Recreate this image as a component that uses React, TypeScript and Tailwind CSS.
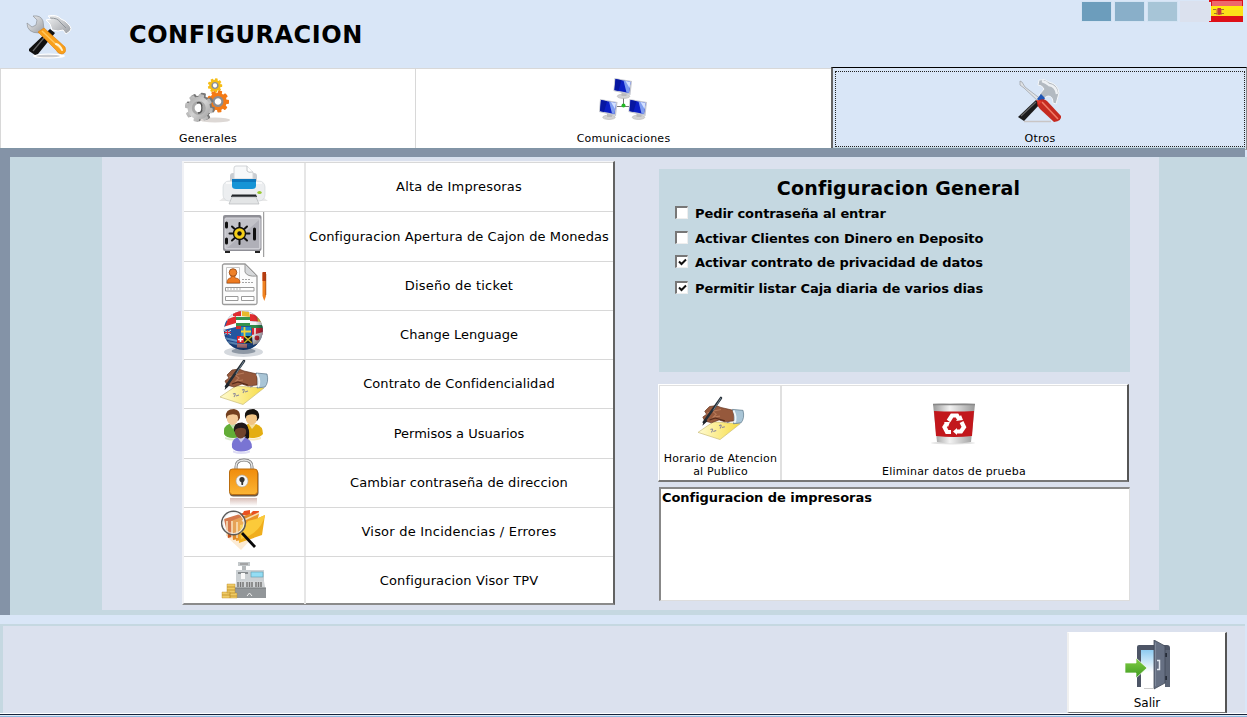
import React from "react";

const Tools = () => (
  <svg width="48" height="44" viewBox="0 0 48 44">
    <defs>
      <linearGradient id="steel" x1="0" y1="0" x2="1" y2="1">
        <stop offset="0" stopColor="#f4f5f6" />
        <stop offset="1" stopColor="#9a9da2" />
      </linearGradient>
    </defs>
    <ellipse cx="24" cy="41" rx="16" ry="2.600" fill="#fff" />
    <ellipse cx="23" cy="41" rx="12" ry="1.3" fill="#c9ccd2" />
    <path d="M25 14 30 18 13 39 10 40 4 36 4 34Z" fill="#111" />
    <path d="M8 36 23 18" stroke="#666" strokeWidth="1.2" />
    <path d="M23 1q9-2 13 3l4 2q3 3 5 5 2 3 0 5l-4 3-3-4-5 1-6-1q-1-7-6-10l5-1z" fill="url(#steel)" stroke="#fff" />
    <path d="M25 3q8 0 10 4l6 6" stroke="#8f949a" fill="none" />
    <path d="M2 8 7 12 11 10 12 5 8 1q8-1 10 5l1 8-5 4q-12 0-12-10z" fill="url(#steel)" stroke="#8f949a" strokeWidth=".7" />
    <path d="M13 17 19 13 40 32q2 6-3 7-4 0-6-4z" fill="#f9a01c" stroke="#e07f08" strokeWidth=".6" />
    <path d="M17 16 36 34" stroke="#ffc65c" strokeWidth="1.5" />
    <path d="M31 29q4 1 6 6" stroke="#fff3d5" strokeWidth="2" fill="none" strokeLinecap="round" />
  </svg>
);

const Gear = ({ cx, cy, r, fill, n = 9, ring = "#8b8d92" }: { cx: number; cy: number; r: number; fill: string; n?: number; ring?: string }) => (
  <g transform={`translate(${cx} ${cy})`}>
    {Array.from({ length: n }, (_, i) => (
      <rect key={i} x={-r * 0.19} y={-r} width={r * 0.38} height={r} rx={r * 0.08} fill={fill} transform={`rotate(${(i * 360) / n + 12})`} />
    ))}
    <circle r={r * 0.8} fill={fill} />
    <circle r={r * 0.4} fill="#fff" stroke={ring} strokeWidth={r * 0.2} />
  </g>
);

const Gears = () => (
  <svg width="46" height="46" viewBox="0 0 46 46">
    <defs>
      <linearGradient id="gg" gradientUnits="userSpaceOnUse" x1="-12" y1="-12" x2="12" y2="12">
        <stop offset="0" stopColor="#a6a6a6" />
        <stop offset=".5" stopColor="#d2d2d2" />
        <stop offset="1" stopColor="#9a9a9a" />
      </linearGradient>
    </defs>
    <ellipse cx="30" cy="42" rx="15" ry="2.5" fill="#ddd8d5" />
    <path d="M20 20 26 19 27 28 20 29Z" fill="#555" />
    <Gear cx={30} cy={7.5} r={7.2} fill="#f6bd16" />
    <Gear cx={33} cy={23.5} r={11} fill="#f47a16" />
    <Gear cx={15.500} cy={29} r={14.3} fill="#777" n={8} />
    <Gear cx={13.8} cy={30} r={14} fill="url(#gg)" n={8} ring="#a9a9a9" />
    <path d="M12 25q5-2 5 5 0 5-4 5" stroke="#555" strokeWidth="1.5" fill="none" />
  </svg>
);

const Screen = ({ x, y }: { x: number; y: number }) => (
  <g transform={`translate(${x} ${y})`}>
    <ellipse cx="10" cy="18.3" rx="6.3" ry="2.2" fill="#d3d3d3" stroke="#aaa" strokeWidth=".5" />
    <path d="M8 14h5v4H8z" fill="#bbb" />
    <path d="M1 0 18.500 3 17 17 0 13Z" fill="#c3c6d0" />
    <path d="M2 1 17 4 15.500 15 1 12Z" fill="#0b1fc4" />
    <path d="M10 2.600 17 4 15.500 15 13 14.400Z" fill="#7f9df0" />
    <path d="M12 3 17 4 16 10Z" fill="#d5e2ff" />
    <path d="M2 1 8 2.200 5 13 1 12Z" fill="#0616a0" />
  </g>
);

const Network = () => (
  <svg width="50" height="44" viewBox="0 0 50 44">
    <path d="M24.500 18V28M16 28.500H34" stroke="#777" fill="none" />
    <Screen x={14.5} y={0} />
    <Screen x={0} y={21} />
    <Screen x={29.500} y={21} />
    <circle cx="24.500" cy="27.500" r="2" fill="#22b822" />
  </svg>
);

const Repair = () => (
  <svg width="46" height="44" viewBox="0 0 46 44">
    <path d="M7 42.500H34" stroke="#c9c5c5" strokeWidth="1.500" />
    <path d="M3 2 5 3 8 8 25 21 22 23 7 9 3 6Z" fill="#dfe2e5" stroke="#8d9196" strokeWidth=".6" />
    <path d="M19 21 23 25 7 42 1 38Z" fill="#1b1b1d" />
    <path d="M4 37 19 23" stroke="#666" strokeWidth="1.200" />
    <path d="M22 1q6-2 10 2 9 2 10 11l-3 11-3-1q0-7-5-7l-4 2-5-3 5-6q-2-4-6-4z" fill="#b3bac1" stroke="#f4f7fa" strokeWidth="1" />
    <path d="M25 2q4 1 7 4 7 1 8 9" stroke="#eef1f4" strokeWidth="2.400" fill="none" />
    <path d="M20 20 24 15 28 19 25 25Z" fill="#1f56b5" />
    <path d="M22 21q5-2 8 1l14 15q1 5-7 6L23 30q-3-3-3-6z" fill="#c52a20" />
    <path d="M25 23 41 40" stroke="#f17b66" strokeWidth="1.600" />
    <path d="M19 21 25 22 22 26Z" fill="#e4372b" />
  </svg>
);

const Printer = () => (
  <g>
    <path d="M0 39 9 32H40L49 39Z" fill="#e9e9e9" />
    <rect x="11" y="11" width="27" height="14" rx="3" fill="#c9cdd2" />
    <path d="M15 17V6q0-2 2-2h11l6 6v7z" fill="#f8f9fa" stroke="#d2d5d8" />
    <path d="M28 4v5q1 2 6 1" fill="#fff" stroke="#c4c7ca" />
    <rect x="4" y="19" width="42" height="20" rx="6" fill="#eceef0" stroke="#cfd3d7" strokeWidth=".6" />
    <path d="M7 21H43" stroke="#fafafa" strokeWidth="2" />
    <path d="M13 17H37V24Q37 27 33 27H17Q13 27 13 24Z" fill="#1694d6" />
    <path d="M13 17H37V20H13Z" fill="#0c77bd" />
    <path d="M13 32.500H37L38 35H12Z" fill="#222629" />
    <path d="M13 35H37L40 42H10Z" fill="#e3e5e6" stroke="#b4b7ba" strokeWidth=".7" />
    <ellipse cx="40.500" cy="30.500" rx="2.200" ry="1.500" fill="#9ac930" />
  </g>
);

const Safe = () => (
  <g>
    <path d="M6 38h5v4H6zM36 38h5v4h-5z" fill="#222" />
    <rect x="4" y="4" width="38.500" height="36" rx="2" fill="#8f8f96" />
    <rect x="6" y="7" width="35" height="31" rx="1" fill="#c3c3c9" stroke="#d9d9df" />
    <path d="M8 37 40 9V37Z" fill="#b0b0b8" />
    <g stroke="#111" strokeWidth="2" strokeLinecap="round">
      <path d="M20.500 12V33M10.500 22.500H30.500M13 15.500 28 29.500M28 15.500 13 29.500" />
    </g>
    <circle cx="20.500" cy="22.500" r="6" fill="#f4ce18" stroke="#111" strokeWidth="1.400" />
    <circle cx="20.500" cy="22.500" r="2.200" fill="#111" />
    <path d="M7.500 12V16M7.500 28V32M35.500 18V28" stroke="#111" strokeWidth="3" strokeLinecap="round" />
    <path d="M44.700 1V46" stroke="#8c8c8c" />
  </g>
);

const Document = () => (
  <g>
    <path d="M5 3H26L38 15V42Q38 43.500 36 43.500H5Q3.500 43.500 3.500 42V4Z" fill="#fcfcfc" stroke="#9b9b9b" strokeWidth="1.300" />
    <path d="M26 3 38 15Q28 16 26 11Z" fill="#d6d8da" stroke="#999" />
    <path d="M7.500 6.500H20.500V22.500H7.500Z" fill="#fff" stroke="#c7c7c7" />
    <path d="M8 22q0-5 4-5v-3h4v3q5 0 5 5z" fill="#ee7b20" stroke="#a94b0c" strokeWidth=".7" />
    <circle cx="14" cy="11.500" r="3.800" fill="#ef8127" stroke="#8f430f" strokeWidth=".8" />
    <path d="M23 18.500H31M23 21.500H35" stroke="#a5a5a5" strokeDasharray="2 1" />
    <path d="M6.500 26.500H35V30H6.500ZM6.500 35.500H19V39.500H6.500ZM22.500 35.500H35V39.500H22.500Z" fill="#fff" stroke="#999" />
    <path d="M8 28H22" stroke="#bbb" strokeDasharray="2 1" />
    <path d="M43.500 12H47V35L45.300 40 43.500 35Z" fill="#f08220" />
    <path d="M43.500 11H47V20H43.500Z" fill="#b53c12" />
    <path d="M46.800 13V34" stroke="#9d420c" strokeWidth=".7" />
  </g>
);

const Globe = () => (
  <g>
    <defs>
      <clipPath id="gc"><circle cx="24.300" cy="20.500" r="19.500" /></clipPath>
      <radialGradient id="gs" cx=".42" cy=".35" r=".66">
        <stop offset=".6" stopColor="#001" stopOpacity="0" />
        <stop offset="1" stopColor="#001" stopOpacity=".5" />
      </radialGradient>
    </defs>
    <ellipse cx="24.500" cy="42" rx="19.500" ry="5" fill="#d5d9de" />
    <ellipse cx="24.500" cy="41" rx="12" ry="3" fill="#8e98a4" />
    <g clipPath="url(#gc)">
      <rect x="4" width="41" height="41" fill="#24559f" />
      <path d="M4 0H45V7L17 8 4 12Z" fill="#efede8" />
      <path d="M14 1H22V6H14ZM9 9 17 6V14L6 17ZM31 4 38 5 39 12 31 11Z" fill="#e12d30" />
      <path d="M23 1 30 2 31 7 23 6Z" fill="#e8b92c" />
      <path d="M38 5 44 11V15L39 12Z" fill="#f0c22c" />
      <path d="M17 7H31V10H17ZM17 13H31V16H17Z" fill="#36924c" />
      <path d="M17 10H31V13H17Z" fill="#fff" />
      <path d="M31 11 44 12V15H31Z" fill="#f2f2f2" />
      <path d="M31 15H44V19H31Z" fill="#30894b" />
      <path d="M4 17 17 13V17L4 20Z" fill="#fff" />
      <path d="M17 16H22V19H17Z" fill="#cc302f" />
      <path d="M22 17H32V26H22Z" fill="#218bc8" />
      <path d="M25.500 17V26M22 21.500H32" stroke="#f5d233" strokeWidth="1.800" />
      <path d="M33 18H44V25H33Z" fill="#dc2735" />
      <path d="M36 18V25" stroke="#f4f4ec" strokeWidth="1.700" />
      <path d="M5 20 12 25M12 20 5 25" stroke="#ddd" strokeWidth="1" />
      <path d="M8.500 20V25M5 22.500H12" stroke="#e02737" />
      <path d="M18 26H25V33H18Z" fill="#e4242a" />
      <path d="M21.500 27V32M19 29.500H24" stroke="#fff" strokeWidth="1.600" />
      <path d="M25 26H33V33H25Z" fill="#17211b" />
      <path d="M25 26 33 33M33 26 25 33" stroke="#dec52b" strokeWidth="1.500" />
      <path d="M33 25 44 22V32L34 35Z" fill="#f4f4f4" />
      <circle cx="38" cy="28" r="2.400" fill="#db2d36" />
      <path d="M5 28 18 31M8 32 18 34" stroke="#6ca0d6" strokeWidth="1.800" />
      <path d="M18 35.500 28 36" stroke="#d69090" strokeWidth="4" />
      <path d="M29 35H37V40H29Z" fill="#2368b6" />
    </g>
    <circle cx="24.300" cy="20.500" r="19.500" fill="url(#gs)" />
  </g>
);

const Hand = () => (
  <g>
    <defs>
      <linearGradient id="paper" x1="0" y1="0" x2="1" y2="0">
        <stop offset="0" stopColor="#fffbd0" />
        <stop offset="1" stopColor="#f7dc45" />
      </linearGradient>
    </defs>
    <path d="M1 38 17 27 45 29 24 45.500Z" fill="url(#paper)" stroke="#c9bc77" strokeWidth=".7" />
    <path d="M14 35q4-2 1 3m2-1 3-1M23 31q4-2 1 3m2-1 3-1M31 28l3-1" stroke="#8c889a" strokeWidth="1.100" fill="none" />
    <path d="M8 16 13 11 20 10 25 12 38 15V26L29 27 23 25 15 28 8 26 6 22 10 19Z" fill="#96593c" stroke="#633521" strokeWidth=".7" />
    <path d="M10 18 16 16 20 19 17 22 24 21M16 16 25 14" stroke="#b87b5a" strokeWidth="1.100" fill="none" />
    <path d="M13 25 19 23 29 26" stroke="#552a1a" strokeWidth="1.200" fill="none" />
    <path d="M37 14 48 15Q50 23 46 28L38 29Q41 22 37 14Z" fill="#a9c5d6" stroke="#577386" strokeWidth=".7" />
    <path d="M38 15Q42 23 39 28" stroke="#f1f7fa" strokeWidth="2" fill="none" />
    <path d="M25 2 7 27.500" stroke="#252d35" strokeWidth="2.600" strokeLinecap="round" />
    <path d="M25 2 17 15" stroke="#718493" />
    <path d="M8 24 5.500 31 11 26Z" fill="#20252c" />
  </g>
);

const User = ({ x, y, hair, skin, body }: { x: number; y: number; hair: string; skin: string; body: string }) => (
  <g transform={`translate(${x} ${y})`}>
    <path d="M-9 25Q-10 17-4 15H4Q11 17 11 25Q8 29 0 29-7 29-9 25Z" fill={body} />
    <path d="M-8 28Q0 31 9 28V30Q0 33-8 30Z" fill={body} opacity=".25" />
    <path d="M-4 14 0 20 5 14Z" fill="#fff" opacity=".6" />
    <path d="M-7 8Q-8 0 1 0 8 1 7 9L5 12H-5Z" fill={hair} />
    <ellipse cx="-.500" cy="9.500" rx="5.600" ry="6.500" fill={skin} />
    <path d="M-6 7Q-6 1 0 1 6 2 6 7 0 3.500-6 7Z" fill={hair} />
  </g>
);

const Users = () => (
  <g>
    <User x={14} y={1} hair="#74401f" skin="#f3ca98" body="#62ad36" />
    <User x={33} y={1} hair="#17130f" skin="#f1c585" body="#e4ae12" />
    <path d="M17 22Q20 13 27 17 31 20 30 30L27 32Z" fill="#191315" />
    <User x={22} y={14.500} hair="#20181a" skin="#70432b" body="#7974d3" />
  </g>
);

const Lock = () => (
  <g>
    <defs>
      <linearGradient id="lock" x1="0" y1="0" x2="0" y2="1">
        <stop offset="0" stopColor="#f08c0b" />
        <stop offset="1" stopColor="#fcb535" />
      </linearGradient>
      <linearGradient id="lockShade" x1="0" y1="0" x2="0" y2="1">
        <stop offset="0" stopColor="#d8bdb6" />
        <stop offset="1" stopColor="#fff" />
      </linearGradient>
    </defs>
    <path d="M11 40H38V48H11Z" fill="url(#lockShade)" />
    <path d="M17 13V9Q17 2 25 2T33 9V13" fill="none" stroke="#777" strokeWidth="3" />
    <path d="M17 13V9Q17 2 25 2T33 9V13" fill="none" stroke="#e5e5e5" strokeWidth="1.400" />
    <rect x="10.500" y="12" width="29" height="26.500" rx="4" fill="#6f5a45" />
    <rect x="10.500" y="11" width="28" height="25.500" rx="3" fill="url(#lock)" stroke="#bb6d0d" />
    <circle cx="23" cy="23" r="6" fill="#f6f6f4" stroke="#aaa" strokeWidth=".6" />
    <circle cx="23" cy="21.500" r="2.600" fill="#333" />
    <path d="M22 22H24.500L24 27H22.500Z" fill="#333" />
  </g>
);

const Folders = () => (
  <g>
    <path d="M8 30H34L22 43Z" fill="#fcebd4" />
    <path d="M23 8 25 4 31 3 31 7 34 4 40 4 39 10Z" fill="#e95121" />
    <path d="M5 12 24 6 24 27 9 31Z" fill="#c9541c" />
    <path d="M12 14 33 6 29 30 14 33Z" fill="#df8828" />
    <path d="M18 15 40 6 35 31 17 34Z" fill="#e9962a" />
    <path d="M8 14V29M13 14V30M18 15V31M23 14 40 6" stroke="#f8dcae" strokeWidth="1.500" />
    <path d="M21 18 27 17 29 14 37 12 46 8 43 28 20 36Z" fill="#f0ae1c" />
    <path d="M21 18 27 17 29 14 37 12 46 8Q42 26 22 32Z" fill="#fbca3a" />
    <circle cx="14.500" cy="16" r="11.800" fill="#fff" fillOpacity=".22" stroke="#5b5b5b" strokeWidth="1.500" />
    <circle cx="14.500" cy="16" r="10.500" fill="none" stroke="#eee" />
    <path d="M23 26 36 40" stroke="#080808" strokeWidth="2.800" />
  </g>
);

const Register = () => (
  <g>
    <path d="M19 6H31V10H19Z" fill="#c3c8ca" />
    <path d="M21 8H29" stroke="#999" strokeWidth="1.500" />
    <path d="M23 10H27V16H23Z" fill="#b5b9bb" />
    <path d="M17 14H45V26H17Z" fill="#cbd0d3" />
    <path d="M17 25H45L47 36H16Z" fill="#d2d5d7" />
    <path d="M16 32H47V42H16Z" fill="#929699" />
    <path d="M16 32H47" stroke="#767a7d" />
    <rect x="32" y="16" width="12" height="5" fill="#93ddf4" stroke="#5d9aad" strokeWidth=".6" />
    <path d="M19 16H29V18H19Z" fill="#868b8e" />
    <path d="M22 17H26V23H22Z" fill="#f8f8f8" />
    <path d="M19 26V31M21.500 26V31M24 26V31M28 26V31M30.500 26V31M33 26V31M37 26V31M39.500 26V31M42 26V31" stroke="#777" strokeWidth="1.500" />
    <path d="M28 40 30.500 37 33 40" stroke="#eee" fill="none" />
    <g fill="#efcb66" stroke="#b88722" strokeWidth=".4">
      <path d="M8 28H16V31H8ZM8 31H16V34H8ZM8 34H16V37H8ZM3 36H11V39H3ZM3 39H11V42H3ZM11 37H18V40H11ZM11 40H18V42H11Z" />
    </g>
  </g>
);

const Bin = () => (
  <svg width="46" height="44" viewBox="0 0 46 44">
    <defs>
      <linearGradient id="tin">
        <stop offset="0" stopColor="#999" />
        <stop offset=".4" stopColor="#f2f2f2" />
        <stop offset="1" stopColor="#999" />
      </linearGradient>
    </defs>
    <ellipse cx="22" cy="41" rx="22" ry="1.500" fill="#e2e2e2" />
    <path d="M2 2Q23 0 44 2L40 40Q23 43 6 40Z" fill="url(#tin)" />
    <path d="M2 2.500H44" stroke="#888" strokeWidth="1.500" />
    <path d="M3 9Q23 10 43 9L41 34Q23 36 5 34Z" fill="#c2171c" />
    <g fill="none" stroke="#fff" strokeWidth="4.200">
      <path d="M17.500 19 21 13.500H26L28 17" />
      <path d="M30.500 20 33 25 30 29.500H25" />
      <path d="M20 30H16L13.500 25 16 21" />
    </g>
    <path d="M25 19 32 18 30 13ZM26 26V33L22 29.500ZM13 20 19 20 17 25Z" fill="#fff" />
  </svg>
);

const Door = () => (
  <svg width="46" height="50" viewBox="0 0 46 50">
    <defs>
      <linearGradient id="sky" x1="0" y1="0" x2="0" y2="1">
        <stop offset="0" stopColor="#8ecbf0" />
        <stop offset=".6" stopColor="#fff" />
      </linearGradient>
      <linearGradient id="arrow" x1="0" y1="0" x2="0" y2="1">
        <stop offset="0" stopColor="#83cf45" />
        <stop offset="1" stopColor="#3d9a20" />
      </linearGradient>
    </defs>
    <path d="M12 47V7Q12 5 14 5H42Q45 5 45 8V47H40V10H16V47Z" fill="#4d5566" />
    <path d="M16 10H32V47H16Z" fill="url(#sky)" />
    <path d="M40 10H45V47H40Z" fill="#5b6475" />
    <path d="M38 13H42V17H38ZM38 36H42V40H38Z" fill="#252c38" />
    <path d="M29 0 40 6V43L29 49Z" fill="#667083" stroke="#434a58" strokeWidth=".8" />
    <path d="M30.500 2.500V46" stroke="#7f899a" />
    <path d="M32 20.500H34.500V29.500H32" stroke="#e3e8ef" strokeWidth="1.500" fill="none" />
    <path d="M19 48.500H29" stroke="#ccc" />
    <path d="M0 23H11V18L22 28 11 38V33H0Z" fill="url(#arrow)" stroke="#fff" strokeWidth=".7" />
  </svg>
);

const Flag = () => (
  <svg width="34" height="22" viewBox="0 0 34 22">
    <path d="M0 0H34V22H0V21H2V2H0Z" fill="#de1018" />
    <path d="M3 1H33V6H3Z" fill="#ee676b" />
    <path d="M2 6H34V16H2Z" fill="#ffe80e" />
    <path d="M2 10H34V16H2Z" fill="#fbe01a" />
    <path d="M7 9H13V15H7Z" fill="#e39b30" />
    <path d="M8.500 8H12V14L10 15 8.500 14Z" fill="#c6343c" />
    <path d="M4 9.500H7M12 9.500H15M5 13.500H8M12 13.500H15" stroke="#a5702f" />
  </svg>
);

const rows: { label: string; h: string; icon: React.ReactNode; track: string }[] = [
  { label: "Alta de Impresoras", h: "h-[49px]", icon: <Printer />, track: "tracking-[0.17px]" },
  { label: "Configuracion Apertura de Cajon de Monedas", h: "h-[50px]", icon: <Safe />, track: "tracking-[0.1px]" },
  { label: "Diseño de ticket", h: "h-[49px]", icon: <Document />, track: "tracking-[0.2px]" },
  { label: "Change Lenguage", h: "h-[49px]", icon: <Globe />, track: "tracking-normal" },
  { label: "Contrato de Confidencialidad", h: "h-[49px]", icon: <Hand />, track: "tracking-[0.07px]" },
  { label: "Permisos a Usuarios", h: "h-[50px]", icon: <Users />, track: "tracking-normal" },
  { label: "Cambiar contraseña de direccion", h: "h-[49px]", icon: <Lock />, track: "tracking-[0.08px]" },
  { label: "Visor de Incidencias / Errores", h: "h-[49px]", icon: <Folders />, track: "tracking-[0.22px]" },
  { label: "Configuracion Visor TPV", h: "h-[49px]", icon: <Register />, track: "tracking-[0.13px]" },
];

const checks: { label: string; on: boolean; h: string }[] = [
  { label: "Pedir contraseña al entrar", on: false, h: "h-[25px]" },
  { label: "Activar Clientes con Dinero en Deposito", on: false, h: "h-[24px]" },
  { label: "Activar contrato de privacidad de datos", on: true, h: "h-[26px]" },
  { label: "Permitir listar Caja diaria de varios dias", on: true, h: "h-[25px]" },
];

const Check = ({ on }: { on: boolean }) => (
  <span className="flex size-[13px] items-center justify-center border-t-2 border-r border-b border-l-2 border-t-[#777] border-r-[#eee] border-b-[#eee] border-l-[#777] bg-white">
    {on && (
      <svg width="9" height="9" viewBox="0 0 9 9">
        <path d="M1 3.500 3.500 6 8 1.500" fill="none" stroke="#111" strokeWidth="2" />
      </svg>
    )}
  </span>
);

const Tab = ({ label, children }: { label: string; children: React.ReactNode }) => (
  <button className="flex flex-col items-center border-t border-l border-[#d8d8d8] bg-white text-[11px] leading-[14px] tracking-[0.25px]">
    <span className="flex h-[63px] items-start pt-[9px]">{children}</span>
    {label}
  </button>
);

export default function App() {
  return (
    <div className="flex h-[717px] w-[1247px] flex-col overflow-hidden bg-[#d9e6f7] font-['DejaVu_Sans',Verdana,sans-serif] text-black">
      <header className="flex h-[67px] shrink-0 justify-between">
        <div className="flex">
          <div className="pt-[15px] pl-[25px]"><Tools /></div>
          <h1 className="mt-[19px] ml-[56px] text-[24px] leading-[32px] font-bold tracking-[0.55px] whitespace-nowrap">CONFIGURACION</h1>
        </div>
        <div className="flex">
          <div className="mt-px flex h-[21px] gap-[2px]">
            <span className="w-[31px] border border-[#d3e3f3] bg-[#6c9dbc]" />
            <span className="w-[31px] border border-[#d3e3f3] bg-[#89afc9]" />
            <span className="w-[31px] border border-[#d3e3f3] bg-[#a7c5d7]" />
            <span className="w-[30px] bg-[#dbe1ee]" />
          </div>
          <div className="mr-[4px] -ml-px"><Flag /></div>
        </div>
      </header>

      <nav className="grid h-[81px] shrink-0 grid-cols-[415px_416px_416px] border-b border-[#c6d9e4] pt-px">
        <Tab label="Generales"><Gears /></Tab>
        <Tab label="Comunicaciones"><Network /></Tab>
        <button className="-mt-px flex border-t border-r border-b border-l-2 border-t-black border-r-[#888] border-b-[#aaa] border-l-[#666] pt-[3px] pr-px pb-[2px] pl-[2px]">
          <span className="flex h-full flex-1 flex-col items-center border border-dotted border-[#222] text-[11px] leading-[14px] tracking-[0.25px]">
            <span className="flex h-[60px] items-start pt-[7px]"><Repair /></span>
            Otros
          </span>
        </button>
      </nav>

      <div className="mr-[2px] h-[9px] shrink-0 border-t border-[#8095a5] bg-[#8493a7]" />

      <main className="mb-[9px] flex h-[458px] shrink-0 border-l-[10px] border-[#8493a7] bg-[#c5d8e1]">
        <div className="ml-[92px] flex h-[453px] w-[1057px] border-t border-[#d8e2f0] bg-[#dbe1ee]">
          <div className="mt-[3px] ml-[80px] h-[444px] w-[433px] border-t border-r-2 border-b-2 border-l-2 border-t-[#f4f5f8] border-r-[#626262] border-b-[#8b8b8b] border-l-[#f0f1f5] bg-white">
            {rows.map((r) => (
              <button key={r.label} className={`${r.h} flex w-full border-t border-[#d8d8d8] last:h-[48px]`}>
                <span className="-mt-px flex w-[120px] shrink-0 justify-center">
                  <svg width="50" height="48" viewBox="0 0 50 48" className="overflow-visible">{r.icon}</svg>
                </span>
                <span className={`${r.track} flex h-full flex-1 items-center justify-center border-l-2 border-[#e6e6e6] pr-px text-[13px] whitespace-nowrap`}>
                  {r.label}
                </span>
              </button>
            ))}
          </div>
          <div className="mt-[11px] ml-[43px] flex flex-col">
            <section className="ml-px h-[203px] w-[471px] bg-[#c5d8e1]">
              <h2 className="mr-px ml-[9px] pt-[7px] text-center text-[19px] leading-[24px] font-bold tracking-[0.2px]">Configuracion General</h2>
              <div className="mt-[6px] ml-[16px]">
                {checks.map((c) => (
                  <label key={c.label} className={`${c.h} flex items-start gap-[7px] text-[13px] leading-[15px] font-bold tracking-[-0.09px] whitespace-nowrap`}>
                    <Check on={c.on} />
                    {c.label}
                  </label>
                ))}
              </div>
            </section>
            <div className="mt-[12px] flex h-[98px] w-[471px] border-t border-r-2 border-b-2 border-l border-t-white border-r-[#555] border-b-[#777] border-l-white bg-white text-[11px] leading-[13px] tracking-[0.21px]">
              <button className="flex w-[123px] flex-col items-center border-t border-r-2 border-l border-[#e0e0e0] pl-px">
                <span className="flex h-[66px] items-start pt-[10px]">
                  <svg width="48" height="45" viewBox="0 0 50 47"><Hand /></svg>
                </span>
                <span className="whitespace-nowrap">Horario de Atencion</span>
                <span>al Publico</span>
              </button>
              <button className="flex flex-1 flex-col items-center border-t border-[#e0e0e0] pr-px">
                <span className="flex h-[79px] items-start pt-[16px]"><Bin /></span>
                Eliminar datos de prueba
              </button>
            </div>
            <div className="mt-[5px] ml-px h-[114px] w-[471px] border-t-2 border-r border-b border-l-2 border-t-[#888] border-r-[#ddd] border-b-[#ddd] border-l-[#888] bg-white pl-px text-[13px] leading-[18px] font-bold tracking-[-0.05px]">
              Configuracion de impresoras
            </div>
          </div>
        </div>
      </main>

      <footer className="mr-[2px] flex h-[89px] shrink-0 justify-end border-t-2 border-l-[3px] border-[#c5d8e1] bg-[#dbe1ee]">
        <button className="mt-[6px] mr-[18px] flex h-[81px] w-[160px] flex-col items-center border-t border-r-2 border-b border-l-2 border-t-white border-r-[#555] border-b-[#777] border-l-[#f0f0f0] bg-white text-[12px] leading-[14px]">
          <span className="flex h-[63px] items-start pt-[7px] pl-[2px]"><Door /></span>
          Salir
        </button>
      </footer>
      <div className="h-px shrink-0 bg-white" />
      <div className="h-px shrink-0 bg-[#17243c]" />
      <div className="h-px shrink-0 bg-[#dfeaf5]" />
      <div className="h-px shrink-0 bg-[#8db9de]" />
    </div>
  );
}
